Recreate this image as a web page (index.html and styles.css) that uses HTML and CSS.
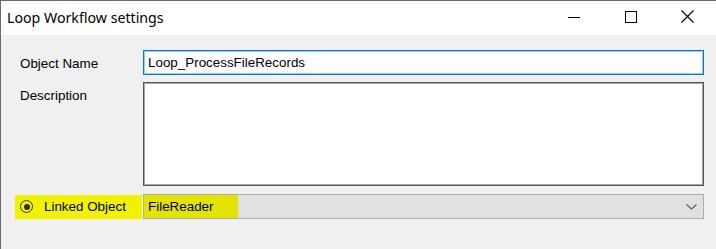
FILE: index.html
```html
<!DOCTYPE html>
<html>
<head>
<meta charset="utf-8">
<link rel="stylesheet" href="styles.css">
</head>
<body>
<div class="window">
  <div class="titlebar">
    <div class="title">Loop Workflow settings</div>
    <div class="controls">
      <div class="ctl">
        <svg width="12" height="12" viewBox="0 0 12 12"><line x1="0" y1="6.5" x2="12" y2="6.5" stroke="#000" stroke-width="1"/></svg>
      </div>
      <div class="ctl">
        <svg width="12" height="12" viewBox="0 0 12 12"><rect x="0.5" y="0.5" width="11" height="11" fill="none" stroke="#000" stroke-width="1"/></svg>
      </div>
      <div class="ctl">
        <svg width="13" height="13" viewBox="0 0 13 13"><path d="M0.5 0.5 L12.5 12.5 M12.5 0.5 L0.5 12.5" stroke="#000" stroke-width="1.1" fill="none"/></svg>
      </div>
    </div>
  </div>
  <div class="content">
    <div class="form">
      <div class="label lbl-name">Object Name</div>
      <div class="textbox focused">Loop_ProcessFileRecords</div>
      <div class="label lbl-desc">Description</div>
      <div class="textarea"></div>
      <div class="label radio-label">
        <span class="radio"><span class="dot"></span></span>
        <span>Linked Object</span>
      </div>
      <div class="combo">
        <span class="combo-text">FileReader</span>
        <svg class="chev" width="11" height="6" viewBox="0 0 11 6"><path d="M0.5 0.5 L5.5 5 L10.5 0.5" stroke="#606060" stroke-width="1.2" fill="none"/></svg>
      </div>
    </div>
  </div>
</div>
</body>
</html>
```
FILE: styles.css
```css
html, body {
  margin: 0;
  padding: 0;
  background: #f0f0f0;
}
body {
  width: 716px;
  height: 249px;
  overflow: hidden;
}
.window {
  border-top: 1px solid #6b6b6b;
  border-left: 1px solid #6b6b6b;
  height: 248px;
  display: flex;
  flex-direction: column;
  background: #f0f0f0;
}
.titlebar {
  height: 34px;
  background: #ffffff;
  display: flex;
  align-items: center;
  justify-content: space-between;
  flex: none;
}
.title {
  font-family: "Noto Sans", "Open Sans", sans-serif;
  font-size: 14.2px;
  color: #000;
  padding-left: 6px;
  padding-bottom: 2px;
}
.controls {
  display: flex;
  height: 100%;
}
.ctl {
  width: 57px;
  display: flex;
  align-items: center;
  justify-content: center;
  padding-bottom: 3px;
  box-sizing: border-box;
}
.ctl svg { display: block; }
.content {
  flex: 1;
  padding: 15px 0 0 19px;
}
.form {
  display: grid;
  grid-template-columns: 123px 561px;
  grid-template-rows: 25px 104px 26px;
  row-gap: 7px;
  font-family: "Liberation Sans", Arial, sans-serif;
  font-size: 13.4px;
  color: #000;
}
.form > :nth-child(5), .form > :nth-child(6) {
  margin-top: 1px;
}
.label {
  white-space: nowrap;
}
.lbl-name {
  padding-top: 6px;
}
.lbl-desc {
  padding-top: 6px;
}
.textbox {
  background: #fff;
  border: 1px solid #0078d7;
  box-shadow: inset 0 0 0 1px #9ccbf0;
  box-sizing: border-box;
  padding: 5px 0 0 4px;
  line-height: 14px;
}
.textarea {
  background: #fff;
  border: 1px solid #555;
  box-shadow: inset 0 0 0 1px #a8a8a8;
  box-sizing: border-box;
}
.radio-label {
  margin-left: -5px;
  margin-right: 1px;
  background: #f2f200;
  display: flex;
  align-items: center;
  gap: 11px;
  padding-left: 5px;
  height: 24px;
  align-self: center;
}
.radio {
  width: 13px;
  height: 13px;
  box-sizing: border-box;
  border: 1.6px solid #2e2e00;
  border-radius: 50%;
  display: flex;
  align-items: center;
  justify-content: center;
}
.dot {
  width: 6px;
  height: 6px;
  border-radius: 50%;
  background: #2e2e00;
}
.combo {
  background: #e1e1e1;
  border: 1px solid #adadad;
  box-sizing: border-box;
  display: flex;
  align-items: stretch;
  justify-content: space-between;
  position: relative;
}
.combo-text {
  background: #e3e300;
  width: 94px;
  box-sizing: border-box;
  padding: 5px 0 0 4px;
  line-height: 14px;
}
.chev {
  align-self: center;
  margin-right: 6px;
}
```
